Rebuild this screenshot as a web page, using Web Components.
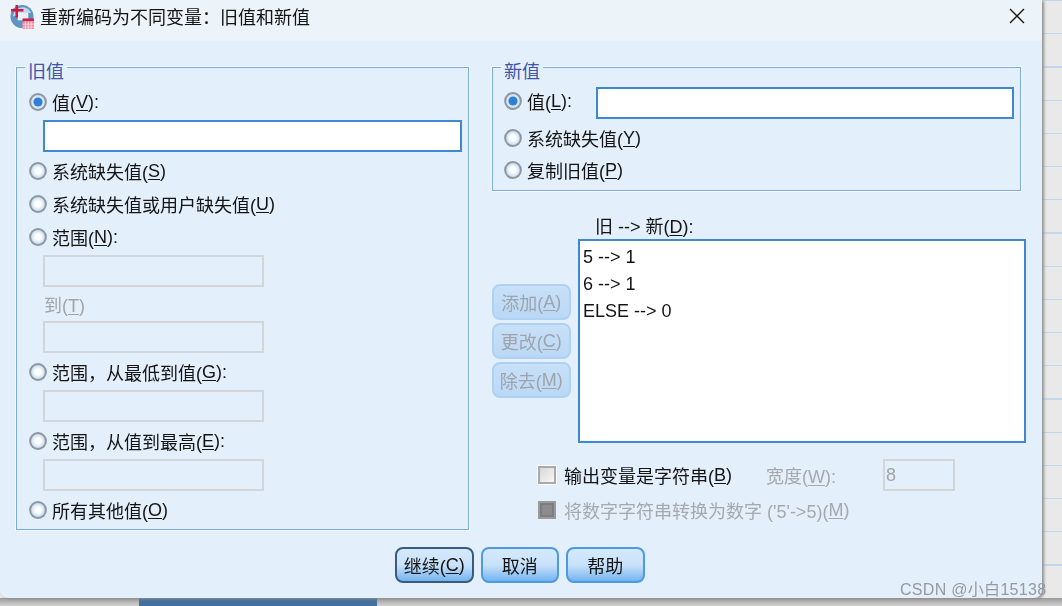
<!DOCTYPE html>
<html lang="zh">
<head>
<meta charset="UTF-8">
<title>重新编码为不同变量：旧值和新值</title>
<style>
  html, body { margin: 0; padding: 0; }
  body { font-family: "Liberation Sans", "Noto Sans CJK SC", sans-serif; font-size: 18px; color: #141414; }
  u { text-underline-offset: 2px; }
</style>
</head>
<body>
<template id="tpl-app">
  <style>
    :host { display: block; width: 1062px; height: 606px; position: relative; overflow: hidden;
      background: repeating-linear-gradient(to bottom, #c3d6ea 0, #c3d6ea 1.2px, #e9e9e9 1.2px, #e9e9e9 33.2px); }
    .bar { position: absolute; left: 139px; top: 598px; width: 238px; height: 8px; background: #44709f; }
    .shade { position: absolute; left: 0; top: 598px; width: 1062px; height: 8px; background: linear-gradient(#9a9a9a, #d2d2d2); }
    .mark { position: absolute; left: 900px; top: 576px; font: 16px "Liberation Sans", "Noto Sans CJK SC", sans-serif; color: #969a9e; letter-spacing: .3px; white-space: nowrap; filter: blur(.3px); }
  </style>
  <div class="shade"></div><div class="bar"></div>
  <slot></slot>
  <div class="mark">CSDN @小白15138</div>
</template>

<template id="tpl-dialog">
  <style>
    :host { display: flex; flex-direction: column; width: 1042px; height: 598px; position: relative; box-sizing: border-box;
      background: #e3effb; border-radius: 0 0 8px 8px; box-shadow: 2px 1px 3px #8f8f8f; }
    header { display: flex; align-items: center; box-sizing: border-box; height: 41px; flex: none; padding: 0 0 9px 10px; background: #ecf4fa; filter: blur(.25px); }
    header .name { margin-left: 5px; flex: 1; }
    .close { margin-right: 16px; width: 18px; height: 18px; }
    main { flex: 1; display: grid; grid-template-columns: 453px 534px; column-gap: 23px; padding: 26px 0 0 16px; align-items: start; filter: blur(.3px); }
    footer { display: flex; justify-content: flex-start; gap: 7px; padding: 0 0 15px 395px; filter: blur(.3px); }
  </style>
  <header>
    <slot name="icon"></slot>
    <span class="name"><slot name="title"></slot></span>
    <svg class="close" viewBox="0 0 18 18"><path d="M2 2 L16 16 M16 2 L2 16" stroke="#111" stroke-width="1.3" fill="none"/></svg>
  </header>
  <main>
    <slot name="left"></slot>
    <slot name="right"></slot>
  </main>
  <footer><slot name="footer"></slot></footer>
</template>

<template id="tpl-group">
  <style>
    :host { display: block; box-sizing: border-box; position: relative; border: 1px solid #7fabd8; box-shadow: 0 0 0 1px #f4f9fe; padding: var(--pad, 0 0 0 12px); height: var(--h, auto); }
    .legend { position: absolute; left: 8px; top: -7px; padding: 0 3px; background: #e3effb; color: #3f55a6; line-height: 22px; }
  </style>
  <div class="legend"><slot name="legend"></slot></div>
  <slot></slot>
</template>

<template id="tpl-radio">
  <style>
    :host { display: flex; align-items: center; height: 24px; white-space: nowrap; }
    .dot { width: 18px; height: 18px; flex: none; margin-right: 5px; }
  </style>
  <svg class="dot" viewBox="0 0 18 18">
    <defs><radialGradient id="g"><stop offset="0.4" stop-color="#fff"/><stop offset="1" stop-color="#c6dcf2"/></radialGradient></defs>
    <circle cx="9" cy="9" r="8.9" fill="#8f969d"/>
    <circle cx="9" cy="9" r="6.9" fill="url(#g)"/>
    <circle class="on" cx="9" cy="9" r="4.6" fill="#2f7fd6"/>
  </svg>
  <slot></slot>
</template>

<template id="tpl-input">
  <style>
    :host { display: flex; align-items: center; box-sizing: border-box; height: 32px; background: #fff; border: 2px solid #3f88d2; padding-left: 1px; }
    :host([disabled]) { background: #e3effb; border: 2px solid #d3d6d9; color: #a2a5a8; }
  </style>
  <slot></slot>
</template>

<template id="tpl-button">
  <style>
    :host { display: flex; align-items: center; justify-content: center; box-sizing: border-box; width: 78.5px; height: 36px; white-space: nowrap;
      border: 2px solid #4c9ae2; border-radius: 8px; background: linear-gradient(#d4e9fc, #c9e2fa 50%, #74b4f0); }
    :host([default]) { border-color: #3a5b7c; }
    :host([disabled]) { border-color: #add2f3; background: linear-gradient(#c8e0f8, #bad8f6); color: #9da4ab; }
  </style>
  <slot></slot>
</template>

<template id="tpl-check">
  <style>
    :host { display: flex; align-items: center; height: 24px; white-space: nowrap; }
    :host([disabled]) { color: #a5a9ad; }
    .box { width: 18px; height: 18px; flex: none; margin-right: 8px; box-sizing: border-box; border: 2px solid #aaa; background: linear-gradient(135deg, #d8d8d8, #f6f6f6); box-shadow: 0 0 0 1px #fff; }
    :host([disabled]) .box { background: #8c8c8c; border-color: #9a9a9a; box-shadow: inset 0 0 0 2px #7d7d7d; }
  </style>
  <span class="box"></span><slot></slot>
</template>

<x-app>
  <x-dialog>
    <svg slot="icon" width="25" height="25" viewBox="0 0 26 26">
      <circle cx="12.5" cy="13" r="12" fill="#5f93c4"/>
      <path d="M3 13 a10 10 0 0 1 19 -4 l-8 1 z" fill="#bcd6ec"/>
      <rect x="8" y="9" width="11" height="8" fill="#e8f0f8"/>
      <path d="M7 1 v13 M1 6.5 h13" stroke="#d3163f" stroke-width="2.6" fill="none"/>
      <rect x="13" y="15" width="12" height="3" fill="#c9234e"/>
      <rect x="13" y="18" width="12" height="8" fill="#ee8aa2"/>
      <path d="M16 18 v8 M19 18 v8 M22 18 v8 M13 21 h12 M13 24 h12" stroke="#fbe3ea" stroke-width=".8"/>
    </svg>
    <span slot="title">重新编码为不同变量：旧值和新值</span>

    <x-group slot="left" style="--h:463px; --pad:22px 0 0 12px">
      <span slot="legend">旧值</span>
      <x-radio checked>值(<u>V</u>):</x-radio>
      <x-input style="width:419px; margin:6px 0 7px 14px"></x-input>
      <x-radio>系统缺失值(<u>S</u>)</x-radio>
      <x-radio style="margin-top:9px">系统缺失值或用户缺失值(<u>U</u>)</x-radio>
      <x-radio style="margin-top:9px">范围(<u>N</u>):</x-radio>
      <x-input disabled style="width:221px; margin:6px 0 7px 14px"></x-input>
      <div style="margin-left:15px; color:#a2a5a8; height:24px; line-height:24px">到(<u>T</u>)</div>
      <x-input disabled style="width:221px; margin:3px 0 7px 14px"></x-input>
      <x-radio>范围，从最低到值(<u>G</u>):</x-radio>
      <x-input disabled style="width:221px; margin:6px 0 7px 14px"></x-input>
      <x-radio>范围，从值到最高(<u>E</u>):</x-radio>
      <x-input disabled style="width:221px; margin:6px 0 7px 14px"></x-input>
      <x-radio>所有其他值(<u>O</u>)</x-radio>
    </x-group>

    <div slot="right">
      <x-group style="--h:124px; --pad:19px 0 0 11px; width:529px">
        <span slot="legend">新值</span>
        <div style="display:flex; align-items:center; gap:24px">
          <x-radio checked style="margin-bottom:4px">值(<u>L</u>):</x-radio>
          <x-input style="width:418px"></x-input>
        </div>
        <x-radio style="margin-top:7px">系统缺失值(<u>Y</u>)</x-radio>
        <x-radio style="margin-top:8px">复制旧值(<u>P</u>)</x-radio>
      </x-group>
      <div style="display:grid; grid-template-columns:86px 448px; margin-top:24px">
        <div></div>
        <div style="padding-left:17px; height:24px; line-height:24px">旧 --&gt; 新(<u>D</u>):</div>
        <div style="display:flex; flex-direction:column; gap:3px; padding-top:45px">
          <x-button disabled>添加(<u>A</u>)</x-button>
          <x-button disabled>更改(<u>C</u>)</x-button>
          <x-button disabled>除去(<u>M</u>)</x-button>
        </div>
        <div style="box-sizing:border-box; height:204px; background:#fff; border:2px solid #3f88d2; padding:3px 3px; line-height:27px">
          <div>5 --&gt; 1</div><div>6 --&gt; 1</div><div>ELSE --&gt; 0</div>
        </div>
      </div>
      <div style="display:flex; align-items:center; margin:16px 0 0 46px; height:32px">
        <x-check>输出变量是字符串(<u>B</u>)</x-check>
        <span style="margin-left:34px; color:#a5a9ad">宽度(<u>W</u>):</span>
        <x-input disabled style="width:72px; margin-left:47px">8</x-input>
      </div>
      <x-check disabled style="margin:7px 0 0 46px">将数字字符串转换为数字 ('5'-&gt;5)(<u>M</u>)</x-check>
    </div>

    <x-button slot="footer" default>继续(<u>C</u>)</x-button>
    <x-button slot="footer">取消</x-button>
    <x-button slot="footer">帮助</x-button>
  </x-dialog>
</x-app>

<script>
  // 每个标签都从对应的 template 克隆内容
  function define(name, tplId, after) {
    customElements.define(name, class extends HTMLElement {
      constructor() {
        super();
        let shadow = this.attachShadow({ mode: 'open' });
        shadow.appendChild(document.getElementById(tplId).content.cloneNode(true));
      }
      connectedCallback() {
        if (after) after(this);
      }
    });
  }
  define('x-app', 'tpl-app');
  define('x-dialog', 'tpl-dialog');
  define('x-group', 'tpl-group');
  define('x-radio', 'tpl-radio', function (el) {
    if (!el.hasAttribute('checked')) el.shadowRoot.querySelector('.on').remove();
  });
  define('x-input', 'tpl-input');
  define('x-button', 'tpl-button');
  define('x-check', 'tpl-check');
</script>
</body>
</html>
